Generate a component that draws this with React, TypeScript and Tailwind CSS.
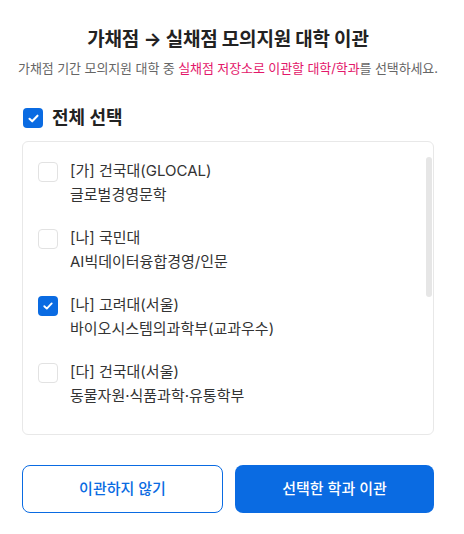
import React, { useState } from 'react'

const items = [
  { tag: '[가]', univ: '건국대(GLOCAL)', major: '글로벌경영문학', checked: false },
  { tag: '[나]', univ: '국민대', major: 'AI빅데이터융합경영/인문', checked: false },
  { tag: '[나]', univ: '고려대(서울)', major: '바이오시스템의과학부(교과우수)', checked: true },
  { tag: '[다]', univ: '건국대(서울)', major: '동물자원·식품과학·유통학부', checked: false },
]

function Check({ on, big }: { on: boolean; big?: boolean }) {
  if (on) {
    return (
      <div className="flex h-5 w-5 shrink-0 items-center justify-center rounded-[4px] bg-[#0a6be2]">
        <svg width={big ? 13 : 12} height={big ? 13 : 12} viewBox="0 0 12 12" fill="none">
          <path d="M2.3 6.2 4.8 8.6 9.7 3.4" stroke="white" strokeWidth="1.9" strokeLinecap="round" strokeLinejoin="round" />
        </svg>
      </div>
    )
  }
  return <div className="h-5 w-5 shrink-0 rounded-[4px] border border-[#e2e2e2] bg-white" />
}

export default function App() {
  const [list] = useState(items)

  return (
    <div
      className="flex h-[534px] w-[464px] flex-col bg-white pl-[22px] pr-[30px] text-[#222]"
      style={{ fontFamily: "Inter, 'Noto Sans CJK KR', sans-serif" }}
    >
      <h1 className="mt-[26px] text-center text-[19px] font-bold leading-[28px] tracking-[-0.2px] text-[#222]">
        가채점 → 실채점 모의지원 대학 이관
      </h1>
      <p className="-mx-[6px] mt-[4px] text-center text-[13px] leading-[20px] tracking-[-0.1px] text-[#666]">
        가채점 기간 모의지원 대학 중 <span className="text-[#e3176a]">실채점 저장소로 이관할 대학/학과</span>를 선택하세요.
      </p>

      <div className="mt-[28px] flex items-center gap-[9px] pl-[1px]">
        <Check on big />
        <span className="text-[18px] font-bold leading-[24px] text-[#222]">전체 선택</span>
      </div>

      <div className="relative mt-[11px] h-[294px] overflow-hidden rounded-[6px] border border-[#e8e8e8]">
        <ul className="flex flex-col gap-[19px] pl-[15px] pt-[17px]">
          {list.map((it, i) => (
            <li key={i} className="flex gap-[12px]">
              <div className="mt-[3px]">
                <Check on={it.checked} />
              </div>
              <div className="text-[15px] leading-[24px] text-[#333]">
                <div>
                  {it.tag} {it.univ}
                </div>
                <div>{it.major}</div>
              </div>
            </li>
          ))}
        </ul>
        <div className="absolute right-[1px] top-[15px] h-[140px] w-[6px] rounded-full bg-[#e6e6e6]" />
      </div>

      <div className="mt-[30px] flex gap-[12px]">
        <button className="h-[48px] flex-1 rounded-[8px] border border-[#0a6be2] bg-white text-[15px] font-medium text-[#0a6be2]">
          이관하지 않기
        </button>
        <button className="h-[48px] flex-1 rounded-[8px] bg-[#0a6be2] text-[15px] font-medium text-white">
          선택한 학과 이관
        </button>
      </div>
    </div>
  )
}
